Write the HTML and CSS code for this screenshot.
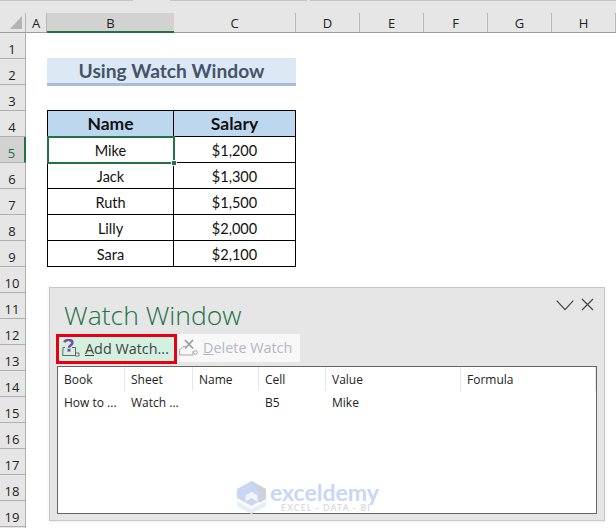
FILE: index.html
```html
<!DOCTYPE html>
<html lang="en">
<head>
<meta charset="utf-8">
<title>Using Watch Window</title>
<link rel="stylesheet" href="styles.css">
</head>
<body>
<div class="sheet">
  <div class="top-strip"><i class="seg seg-a"></i><i class="seg seg-b"></i><i class="seg seg-c"></i></div>
  <div class="col-head">
    <div class="corner"><svg width="26" height="20" viewBox="0 0 26 20"><path d="M22 4v13H10z" fill="#b4b4b4"/></svg></div>
    <div class="col col-a">A</div>
    <div class="col col-b selected">B</div>
    <div class="col col-c">C</div>
    <div class="col col-n">D</div>
    <div class="col col-n">E</div>
    <div class="col col-n">F</div>
    <div class="col col-n">G</div>
    <div class="col col-n">H</div>
  </div>
  <div class="body">
    <div class="row-head">
      <div class="rh">1</div><div class="rh">2</div><div class="rh">3</div><div class="rh">4</div>
      <div class="rh selected">5</div><div class="rh">6</div><div class="rh">7</div><div class="rh">8</div>
      <div class="rh">9</div><div class="rh">10</div><div class="rh">11</div><div class="rh">12</div>
      <div class="rh">13</div><div class="rh">14</div><div class="rh">15</div><div class="rh">16</div>
      <div class="rh">17</div><div class="rh">18</div><div class="rh">19</div><div class="rh"></div>
    </div>
    <div class="cells">
      <div class="title">Using Watch Window</div>
      <table class="data">
        <colgroup><col class="c1"><col class="c2"></colgroup>
        <tr><th>Name</th><th>Salary</th></tr>
        <tr><td class="active">Mike<span class="sel"><span class="handle"></span></span></td><td>$1,200</td></tr>
        <tr><td>Jack</td><td>$1,300</td></tr>
        <tr><td>Ruth</td><td>$1,500</td></tr>
        <tr><td>Lilly</td><td>$2,000</td></tr>
        <tr><td>Sara</td><td>$2,100</td></tr>
      </table>
    </div>
  </div>

  <section class="watch">
    <header class="watch-head">
      <h1 class="watch-title">Watch Window</h1>
      <div class="win-icons">
        <svg width="18" height="11" viewBox="0 0 18 11"><path d="M.7.7 9 9.6 17.3.7" fill="none" stroke="#444" stroke-width="1.2"/></svg>
        <svg width="13" height="13" viewBox="0 0 13 13"><path d="M1 1l11 11M12 1 1 12" fill="none" stroke="#444" stroke-width="1.2"/></svg>
      </div>
    </header>
    <div class="toolbar">
      <button class="btn btn-add">
        <svg width="20" height="20" viewBox="0 0 20 20">
          <path d="M3 8.500H1L.7 16.500h12.800v-8H10" fill="none" stroke="#666"/>
          <path d="M13.500 14h3.500v3h-3.500z" fill="#f4f4f4" stroke="#666"/>
          <path d="M2.300 3.200C3 1.500 4.700 1 6.500 1c2.400 0 3.900 1.100 3.900 2.800 0 2.500-3.400 2.400-3.400 5" fill="none" stroke="#7f4aa5" stroke-width="2.600"/>
          <rect x="5.500" y="9.800" width="3" height="2.800" fill="#7f4aa5"/>
        </svg>
        <span><u>A</u>dd Watch...</span>
      </button>
      <button class="btn btn-del">
        <svg width="20" height="20" viewBox="0 0 20 20">
          <path d="M.5 17v-5L4 8.500h2.500M14 13v4H.5" fill="none" stroke="#a8a8a8"/>
          <path d="M6 2l8 8.500M14 2l-8 8.500" fill="none" stroke="#9c9c9c" stroke-width="1.800"/>
          <circle cx="16.500" cy="14.500" r="1.800" fill="none" stroke="#a8a8a8"/>
        </svg>
        <span><u>D</u>elete Watch</span>
      </button>
    </div>
    <div class="list">
      <div class="list-row list-header">
        <div class="lc">Book</div><div class="lc">Sheet</div><div class="lc">Name</div><div class="lc">Cell</div><div class="lc">Value</div><div class="lc">Formula</div>
      </div>
      <div class="list-row list-item">
        <div class="lc">How to ...</div><div class="lc">Watch ...</div><div class="lc"></div><div class="lc">B5</div><div class="lc">Mike</div><div class="lc"></div>
      </div>
      <div class="mark">
        <svg width="29" height="33" viewBox="0 0 29 33">
          <path d="M14.500 0 29 8v9L14.500 25 0 17V8z" fill="#c9d7f5"/>
          <path d="M14.500 0 29 8v10l-7 4V12z" fill="#ced3da"/>
          <path d="M0 20l14.500 8L29 20v5l-14.500 8L0 25z" fill="#e8eff7"/>
          <path d="M14.500 11l6 3.500v6l-6 3.500-6-3.500v-6z" fill="#f3f5f9"/>
          <path d="M14.500 17l6 3.500-6 3.500-6-3.500z" fill="#c9d7f5"/>
        </svg>
        <div class="mark-text">
          <div class="mark-name">exceldemy</div>
          <div class="mark-tag">EXCEL - DATA - BI</div>
        </div>
      </div>
    </div>
  </section>
</div>
</body>
</html>
```

FILE: styles.css
```css
* { box-sizing: border-box; }
html, body { margin: 0; padding: 0; background: #fff; }
body { width: 616px; height: 528px; overflow: hidden; font-family: "Open Sans", "Noto Sans", sans-serif; color: #222; }

.sheet { position: relative; width: 616px; height: 528px; overflow: hidden; }

.top-strip { height: 13px; background: #e6e6e6; display: flex; align-items: flex-start; }
.seg { display: block; height: 1px; background: #c4c4c4; }
.seg-a { width: 133px; }
.seg-b { width: 137px; margin-left: 37px; }
.seg-c { width: 306px; margin-left: 3px; }

.col-head { display: flex; height: 20px; background: #e6e6e6; border-bottom: 1px solid #9d9d9d; }
.corner { width: 26px; height: 19px; border-right: 1px solid #b8b8b8; }
.corner svg { display: block; margin-top: -1px; }
.col { height: 19px; font-size: 13px; line-height: 20px; text-align: center; border-right: 1px solid #b8b8b8; color: #222; }
.col-a { width: 21px; }
.col-b { width: 127px; }
.col-c { width: 122px; }
.col-n { width: 64px; }
.col.selected { background: #d2d2d2; height: 20px; margin-bottom: -1px; border-right: 0; border-bottom: 2px solid #217346; }

.body { display: flex; }
.row-head { width: 26px; flex: none; background: #e6e6e6; border-right: 1px solid #b0b0b0; }
.rh { height: 26px; border-bottom: 1px solid #b0b0b0; font-size: 13px; line-height: 33px; padding-right: 1px; text-align: center; color: #222; overflow: hidden; }
.rh.selected { background: #d2d2d2; border-right: 2px solid #217346; margin-right: -1px; color: #217346; }

.cells { flex: 1; padding: 25px 0 0 21px; }
.title { width: 249px; height: 28px; background: #dce9f5; border-bottom: 3px solid #a9bcdc; font: 700 19.2px/26px Lato, sans-serif; text-align: center; color: #44546a; }

.data { margin-top: 24px; border-collapse: collapse; table-layout: fixed; width: 248px; font-family: Lato, sans-serif; color: #111; }
.c1 { width: 126px; }
.c2 { width: 122px; }
.data th, .data td { height: 26px; padding: 0; border: 1px solid #000; text-align: center; font-size: 14.5px; line-height: 20px; }
.data td { padding-top: 2px; }
.data th { background: #bdd7ee; font-size: 17.5px; font-weight: 700; }
.data .active { position: relative; }
.sel { position: absolute; left: -1px; top: -1px; width: 128px; height: 28px; border: 2px solid #217346; }
.handle { position: absolute; right: -4px; bottom: -4px; width: 6px; height: 6px; background: #217346; border: 1px solid #fff; }

.watch { position: absolute; left: 49px; top: 287px; width: 556px; height: 234px; background: #e6e6e6; border: 1px solid #c8c8c8; box-shadow: 0 1px 3px rgba(0,0,0,.08); }
.watch-head { height: 46px; display: flex; justify-content: space-between; padding: 7px 10px 0 14px; }
.watch-title { margin: 0; font-weight: 300; font-size: 26.5px; line-height: 40px; color: #217346; }
.win-icons { display: flex; gap: 7px; align-items: flex-start; padding-top: 3px; }
.win-icons svg:first-child { margin-top: 2px; }

.toolbar { display: flex; height: 30px; margin: 0 0 2px 6px; }
.btn { display: flex; align-items: center; gap: 3px; margin: 0; font: inherit; font-size: 14.4px; line-height: 20px; background: none; padding: 0; text-align: left; }
.btn svg { flex: none; }
.btn-add { width: 121px; height: 30px; background: #d3f0e0; border: 3px solid #e60012; padding-left: 3px; color: #444; }
.btn-del { width: 123px; height: 28px; background: #f8f8f8; border: 0; padding-left: 2px; gap: 4px; color: #b4b8c0; }

.list { position: relative; width: 540px; height: 148px; margin-left: 7px; background: #fff; border: 1px solid #666; font-size: 12px; color: #222; }
.list-row { display: grid; grid-template-columns: 67px 68px 66px 67px 135px 135px; }
.list-header { height: 24px; line-height: 25px; }
.list-header .lc { border-right: 1px solid #e6e6e6; }
.list-item { height: 23px; line-height: 24px; }
.lc { padding-left: 6px; white-space: nowrap; overflow: hidden; }

.mark { position: absolute; left: 179px; top: 114px; display: flex; gap: 4px; }
.mark svg { flex: none; }
.mark-text { width: 110px; }
.mark-name { font: 700 23px/22px Lato, sans-serif; color: #c9d7f7; }
.mark-tag { font: 700 8.500px/10px Lato, sans-serif; color: #d8dce2; text-align: center; letter-spacing: 1.200px; padding-left: 2px; }
```
